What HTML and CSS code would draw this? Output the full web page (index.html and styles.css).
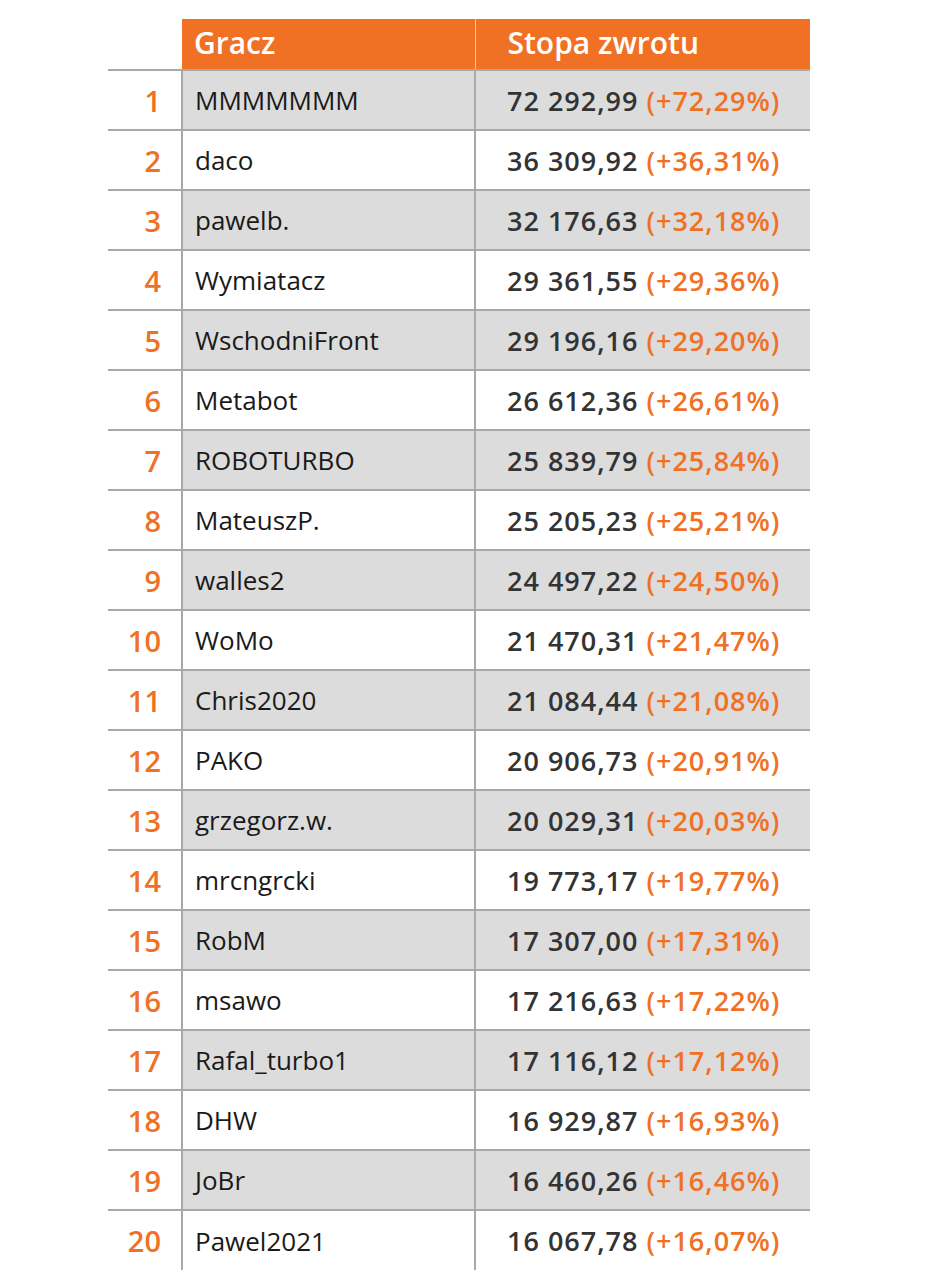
FILE: index.html
```html
<!DOCTYPE html>
<html lang="pl">
<head>
<meta charset="utf-8">
<link rel="stylesheet" href="styles.css">
</head>
<body>
<table class="ranking">
  <colgroup>
    <col class="c-rank">
    <col class="c-name">
    <col class="c-val">
  </colgroup>
  <thead>
    <tr>
      <th class="rank-h"></th>
      <th class="name-h">Gracz</th>
      <th class="val-h">Stopa zwrotu</th>
    </tr>
  </thead>
  <tbody>
    <tr class="odd"><td class="rank">1</td><td class="name">MMMMMMM</td><td class="val">72 292,99 <span class="pct">(+72,29%)</span></td></tr>
    <tr><td class="rank">2</td><td class="name">daco</td><td class="val">36 309,92 <span class="pct">(+36,31%)</span></td></tr>
    <tr class="odd"><td class="rank">3</td><td class="name">pawelb.</td><td class="val">32 176,63 <span class="pct">(+32,18%)</span></td></tr>
    <tr><td class="rank">4</td><td class="name">Wymiatacz</td><td class="val">29 361,55 <span class="pct">(+29,36%)</span></td></tr>
    <tr class="odd"><td class="rank">5</td><td class="name">WschodniFront</td><td class="val">29 196,16 <span class="pct">(+29,20%)</span></td></tr>
    <tr><td class="rank">6</td><td class="name">Metabot</td><td class="val">26 612,36 <span class="pct">(+26,61%)</span></td></tr>
    <tr class="odd"><td class="rank">7</td><td class="name">ROBOTURBO</td><td class="val">25 839,79 <span class="pct">(+25,84%)</span></td></tr>
    <tr><td class="rank">8</td><td class="name">MateuszP.</td><td class="val">25 205,23 <span class="pct">(+25,21%)</span></td></tr>
    <tr class="odd"><td class="rank">9</td><td class="name">walles2</td><td class="val">24 497,22 <span class="pct">(+24,50%)</span></td></tr>
    <tr><td class="rank">10</td><td class="name">WoMo</td><td class="val">21 470,31 <span class="pct">(+21,47%)</span></td></tr>
    <tr class="odd"><td class="rank">11</td><td class="name">Chris2020</td><td class="val">21 084,44 <span class="pct">(+21,08%)</span></td></tr>
    <tr><td class="rank">12</td><td class="name">PAKO</td><td class="val">20 906,73 <span class="pct">(+20,91%)</span></td></tr>
    <tr class="odd"><td class="rank">13</td><td class="name">grzegorz.w.</td><td class="val">20 029,31 <span class="pct">(+20,03%)</span></td></tr>
    <tr><td class="rank">14</td><td class="name">mrcngrcki</td><td class="val">19 773,17 <span class="pct">(+19,77%)</span></td></tr>
    <tr class="odd"><td class="rank">15</td><td class="name">RobM</td><td class="val">17 307,00 <span class="pct">(+17,31%)</span></td></tr>
    <tr><td class="rank">16</td><td class="name">msawo</td><td class="val">17 216,63 <span class="pct">(+17,22%)</span></td></tr>
    <tr class="odd"><td class="rank">17</td><td class="name">Rafal_turbo1</td><td class="val">17 116,12 <span class="pct">(+17,12%)</span></td></tr>
    <tr><td class="rank">18</td><td class="name">DHW</td><td class="val">16 929,87 <span class="pct">(+16,93%)</span></td></tr>
    <tr class="odd"><td class="rank">19</td><td class="name">JoBr</td><td class="val">16 460,26 <span class="pct">(+16,46%)</span></td></tr>
    <tr class="last"><td class="rank">20</td><td class="name">Pawel2021</td><td class="val">16 067,78 <span class="pct">(+16,07%)</span></td></tr>
  </tbody>
</table>
</body>
</html>
```
FILE: styles.css
```css
html, body {
  margin: 0;
  padding: 0;
  background: #ffffff;
}
body {
  padding: 19px 0 0 108px;
  font-family: "Open Sans", "Noto Sans", sans-serif;
}
.ranking {
  border-collapse: collapse;
  border-spacing: 0;
  table-layout: fixed;
  width: 702px;
}
.c-rank { width: 74px; }
.c-name { width: 293px; }
.c-val { width: 335px; }
.rank-h {
  height: 50px;
  padding: 0;
  background: #ffffff;
}
.name-h, .val-h {
  background: #f07124;
  color: #ffffff;
  font-weight: 600;
  font-size: 30px;
  text-align: left;
  vertical-align: middle;
  padding: 0 0 4px 12px;
}
.val-h {
  padding-left: 32px;
  border-left: 1px solid #f8c8a4;
}
.ranking tbody tr { height: 60px; }
.rank, .name, .val {
  border-top: 2px solid #a9a9a9;
  vertical-align: middle;
  padding: 0;
}
.odd .name,
.odd .val { background: #dcdcdc; }
.rank {
  text-align: right;
  padding-right: 20px;
  color: #f07124;
  font-weight: 600;
  font-size: 29px;
}
.name {
  border-left: 2px solid #a9a9a9;
  padding-left: 12px;
  color: #1a1a1a;
  font-size: 26px;
}
.val {
  border-left: 2px solid #a9a9a9;
  padding-left: 31px;
  color: #333333;
  font-weight: 600;
  font-size: 27px;
  letter-spacing: 1px;
  white-space: nowrap;
}
.pct { color: #f07124; }
```
